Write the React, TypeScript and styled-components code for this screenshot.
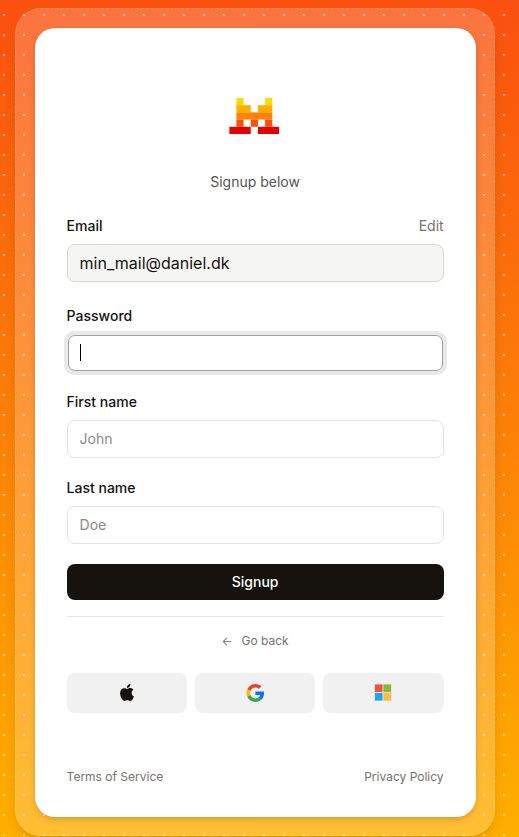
import React from "react";
import styled, { createGlobalStyle } from "styled-components";

const GlobalStyle = createGlobalStyle`
  *, *::before, *::after { box-sizing: border-box; }
  html, body { margin: 0; height: 837px; overflow: hidden; }
  body { font-family: Inter, "Liberation Sans", sans-serif; color: #16120e; }
  button, input { font: inherit; color: inherit; }
  a { color: inherit; text-decoration: none; }
`;

const Page = styled.main`
  height: 837px;
  padding: 8px 24.4px 0 14.6px;
  overflow: hidden;
  background: linear-gradient(180deg, #fa500f 0%, #ffaf00 100%);
`;

const Frame = styled.div`
  height: 828px;
  padding: 19px 18px 18px 19px;
  border: 1px dashed rgba(255, 255, 255, 0.2);
  border-radius: 26px;
  background: rgba(255, 255, 255, 0.2);
  box-shadow: 0 10px 15px -3px rgba(0, 0, 0, 0.1), 0 4px 6px -4px rgba(0, 0, 0, 0.1);
`;

/* Dot grid laid over the backdrop and the translucent frame. */
const Dots = styled.div`
  position: absolute;
  inset: 0 0 auto 0;
  height: 837px;
  background-image: conic-gradient(from 270deg at 2px 2px, rgba(255, 255, 255, 0.5) 0 90deg, transparent 0);
  background-size: 20px 20px;
  background-position: 3px 14px;
  pointer-events: none;
`;

const Card = styled.section`
  position: relative;
  display: flex;
  flex-direction: column;
  height: 789px;
  padding: 70px 32px 31px;
  border-radius: 20px;
  background: #fff;
  box-shadow: 0 4px 8px -2px rgba(0, 0, 0, 0.14), 0 1px 4px rgba(0, 0, 0, 0.06);
`;

const Logo = styled.svg`
  display: block;
  width: 50.3px;
  height: 36px;
  margin: 0 auto 38px;
  transform: translateX(-0.8px);
`;

const Subtitle = styled.p`
  margin: 0 0 24px;
  font-size: 14px;
  line-height: 20px;
  text-align: center;
  color: #57534e;
`;

const Field = styled.div<{ $gap: number }>`
  display: flex;
  flex-direction: column;
  gap: 8px;
  margin-bottom: ${(p) => p.$gap}px;
`;

const LabelRow = styled.div`
  display: flex;
  justify-content: space-between;
  font-size: 14px;
  line-height: 20px;
`;

const Label = styled.label`
  font-weight: 500;
`;

const EditLink = styled.a`
  color: #78716c;
`;

const Input = styled.input`
  width: 100%;
  height: 38px;
  padding: 0 12px 1px;
  border: 1px solid #e3e3e3;
  border-radius: 8px;
  background: #fff;
  font-size: 14px;
  outline: none;
  &::placeholder { color: #8b8987; opacity: 1; }
  &:read-only {
    padding-bottom: 0;
    border-color: #d6d6d4;
    background: #f5f5f4;
    font-size: 16px;
  }
`;

const FocusedInput = styled.div`
  display: flex;
  align-items: center;
  height: 36px;
  margin: 1px;
  padding: 0 0 2px 11px;
  border: 1px solid #a2a2a2;
  border-radius: 7px;
  box-shadow: 0 0 0 4px #e9e9e9;
`;

const Caret = styled.span`
  width: 1px;
  height: 17px;
  background: #000;
`;

const SubmitButton = styled.button`
  height: 36px;
  padding: 0 0 2px;
  border: 0;
  border-radius: 8px;
  background: #16120e;
  color: #fff;
  font-size: 14px;
  font-weight: 500;
`;

const Divider = styled.hr`
  width: 100%;
  height: 1px;
  margin: 16px 0 14px;
  border: 0;
  background: #e6e6e6;
`;

const BackLink = styled.a`
  display: flex;
  align-items: center;
  justify-content: center;
  gap: 9px;
  height: 20px;
  padding-bottom: 1px;
  margin-bottom: 22px;
  font-size: 12px;
  color: #78716c;
`;

const Providers = styled.div`
  display: grid;
  grid-template-columns: repeat(3, 1fr);
  gap: 8px;
`;

const ProviderButton = styled.button`
  display: flex;
  align-items: center;
  justify-content: center;
  height: 40px;
  padding: 0 0 1px;
  border: 0;
  border-radius: 8px;
  background: #f1f1f1;
`;

const Footer = styled.footer`
  display: flex;
  justify-content: space-between;
  margin-top: auto;
  font-size: 12px;
  line-height: 18px;
  color: #78716c;
`;

const blocks: [number, number, number, string][] = [
  [1, 0, 1, "#ffd800"],
  [5, 0, 1, "#ffd800"],
  [1, 1, 2, "#ffaf00"],
  [4, 1, 2, "#ffaf00"],
  [1, 2, 5, "#ff8205"],
  [1, 3, 1, "#fa500f"],
  [3, 3, 1, "#fa500f"],
  [5, 3, 1, "#fa500f"],
  [0, 4, 3, "#e10500"],
  [4, 4, 3, "#e10500"],
];

const MistralLogo = () => (
  <Logo viewBox="0 0 7 5" preserveAspectRatio="none">
    {blocks.map(([x, y, w, fill]) => (
      <rect key={`${x}-${y}`} x={x} y={y} width={w} height={1} fill={fill} />
    ))}
  </Logo>
);

const ArrowIcon = () => (
  <svg width="11" height="10" viewBox="0 0 11 10" fill="none" stroke="#8a8580" strokeWidth="1.1" strokeLinecap="round" strokeLinejoin="round">
    <path d="M9 5.5H1.3M4.700 2.200L1.300 5.500L4.700 8.800" />
  </svg>
);

const AppleIcon = () => (
  <svg width="14" height="17" viewBox="0 0 814 1000" fill="#16120e">
    <path d="M788.1 340.9c-5.8 4.5-108.2 62.2-108.2 190.5 0 148.4 130.3 200.9 134.2 202.2-.6 3.2-20.7 71.9-68.7 141.9-42.8 61.6-87.5 123.1-155.5 123.1s-85.5-39.5-164-39.5c-76.5 0-103.7 40.8-165.9 40.8s-105.6-57-155.5-127C46.700 790.700 0 663 0 541.800c0-194.400 126.400-297.500 250.800-297.500 66.100 0 121.200 43.400 162.700 43.400 39.500 0 101.100-46 176.300-46 28.500 0 130.900 2.600 198.300 99.200zm-234-181.500c31.100-36.900 53.100-88.100 53.100-139.300 0-7.100-.6-14.300-1.900-20.100-50.600 1.900-110.800 33.700-147.100 75.800-28.500 32.400-55.100 83.600-55.100 135.500 0 7.800 1.300 15.600 1.900 18.100 3.200.6 8.400 1.300 13.600 1.300 45.400 0 102.500-30.400 135.500-71.300z" />
  </svg>
);

const GoogleIcon = () => (
  <svg width="18" height="18" viewBox="-1 0 48 48">
    <path fill="#ea4335" d="M24 9.500c3.540 0 6.710 1.220 9.210 3.600l6.850-6.850C35.900 2.380 30.470 0 24 0 14.620 0 6.510 5.380 2.560 13.220l7.980 6.190C12.430 13.720 17.740 9.500 24 9.500z" />
    <path fill="#0f6fff" d="M46.980 24.550c0-1.570-.15-3.090-.38-4.550H24v9.020h12.940c-.58 2.960-2.260 5.480-4.780 7.180l7.730 6c4.510-4.180 7.090-10.360 7.090-17.650z" />
    <path fill="#fbbc05" d="M10.530 28.590c-.48-1.450-.76-2.990-.76-4.590s.27-3.140.76-4.590l-7.980-6.190C.92 16.460 0 20.120 0 24c0 3.880.92 7.540 2.560 10.780l7.970-6.190z" />
    <path fill="#34a853" d="M24 48c6.480 0 11.930-2.130 15.890-5.810l-7.730-6c-2.150 1.450-4.920 2.300-8.160 2.300-6.260 0-11.570-4.220-13.470-9.910l-7.980 6.190C6.510 42.620 14.620 48 24 48z" />
  </svg>
);

const MicrosoftIcon = () => (
  <svg width="18" height="18" viewBox="0 0.5 18 18">
    <path fill="#c9c9c9" opacity=".5" d="M.4.4h17.200v17.200H.4z" />
    <path fill="#f25533" d="M1 1h7.500v7.500H1z" />
    <path fill="#85bb35" d="M9.500 1H17v7.500H9.500z" />
    <path fill="#20a4ef" d="M1 9.500h7.500V17H1z" />
    <path fill="#ffbb3c" d="M9.500 9.500H17V17H9.500z" />
  </svg>
);

export default function App() {
  return (
    <>
      <GlobalStyle />
      <Page>
        <Dots />
        <Frame>
          <Card>
            <MistralLogo />
            <Subtitle>Signup below</Subtitle>
            <Field $gap={24}>
              <LabelRow>
                <Label htmlFor="email">Email</Label>
                <EditLink href="#">Edit</EditLink>
              </LabelRow>
              <Input id="email" readOnly value="min_mail@daniel.dk" />
            </Field>
            <Field $gap={20}>
              <LabelRow>
                <Label>Password</Label>
              </LabelRow>
              <FocusedInput>
                <Caret />
              </FocusedInput>
            </Field>
            <Field $gap={20}>
              <LabelRow>
                <Label htmlFor="first">First name</Label>
              </LabelRow>
              <Input id="first" placeholder="John" />
            </Field>
            <Field $gap={20}>
              <LabelRow>
                <Label htmlFor="last">Last name</Label>
              </LabelRow>
              <Input id="last" placeholder="Doe" />
            </Field>
            <SubmitButton>Signup</SubmitButton>
            <Divider />
            <BackLink href="#">
              <ArrowIcon />
              Go back
            </BackLink>
            <Providers>
              <ProviderButton aria-label="Apple"><AppleIcon /></ProviderButton>
              <ProviderButton aria-label="Google"><GoogleIcon /></ProviderButton>
              <ProviderButton aria-label="Microsoft"><MicrosoftIcon /></ProviderButton>
            </Providers>
            <Footer>
              <a href="#">Terms of Service</a>
              <a href="#">Privacy Policy</a>
            </Footer>
          </Card>
        </Frame>
      </Page>
    </>
  );
}
